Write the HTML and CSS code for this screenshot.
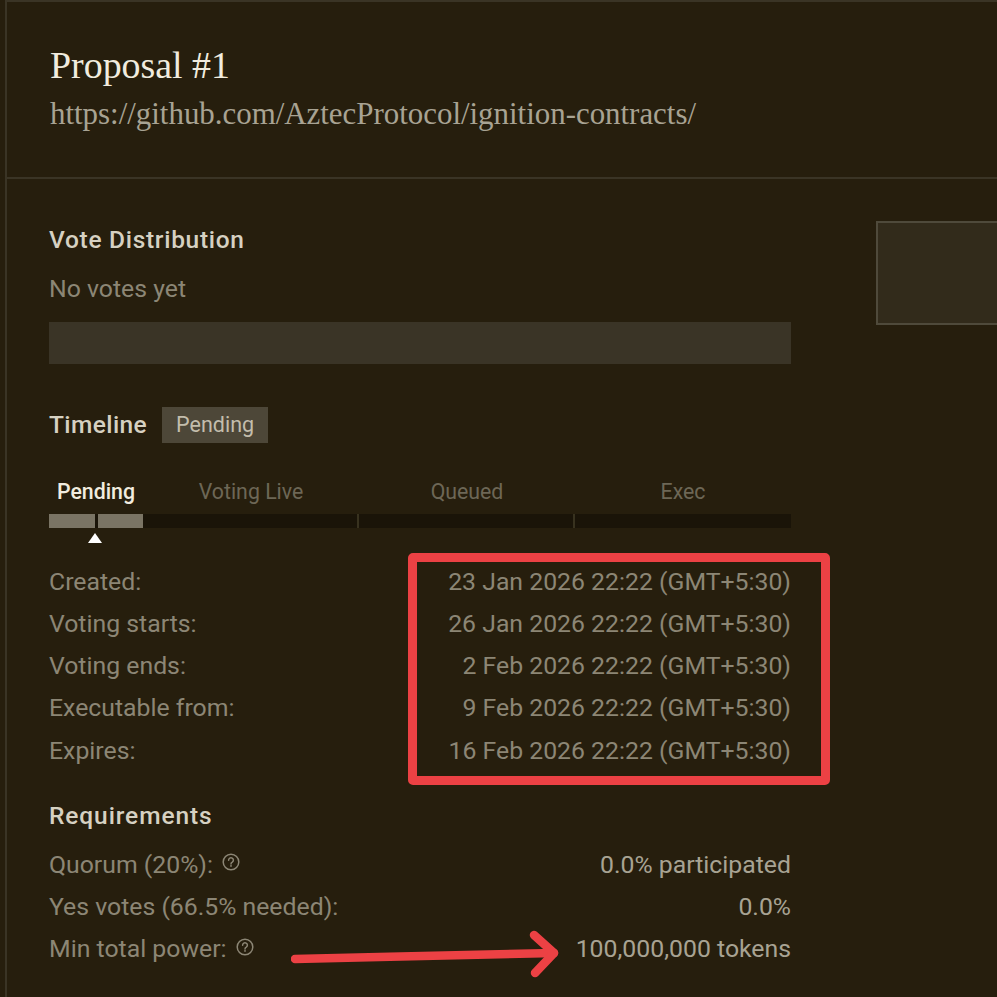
FILE: index.html
```html
<!DOCTYPE html>
<html lang="en">
<head>
<meta charset="utf-8">
<title>Proposal #1</title>
<link rel="stylesheet" href="styles.css">
</head>
<body>
<div class="panel">
  <header class="head">
    <h1 class="title">Proposal #1</h1>
    <div class="url">https://github.com/AztecProtocol/ignition-contracts/</div>
  </header>
  <div class="content">
    <main class="main">
      <h2 class="h">Vote Distribution</h2>
      <div class="novotes">No votes yet</div>
      <div class="votebar"></div>
      <div class="tl-head">
        <h2 class="h">Timeline</h2>
        <span class="badge">Pending</span>
      </div>
      <div class="stages">
        <span class="stage active">Pending</span>
        <span class="stage">Voting Live</span>
        <span class="stage">Queued</span>
        <span class="stage">Exec</span>
      </div>
      <div class="track">
        <div class="seg">
          <span class="fill"></span><span class="fill"></span>
          <span class="marker"></span>
        </div>
        <div class="seg"></div>
        <div class="seg"></div>
        <div class="seg"></div>
      </div>
      <dl class="rows dates">
        <div class="row"><dt>Created:</dt><dd>23 Jan 2026 22:22 (GMT+5:30)</dd></div>
        <div class="row"><dt>Voting starts:</dt><dd>26 Jan 2026 22:22 (GMT+5:30)</dd></div>
        <div class="row"><dt>Voting ends:</dt><dd>2 Feb 2026 22:22 (GMT+5:30)</dd></div>
        <div class="row"><dt>Executable from:</dt><dd>9 Feb 2026 22:22 (GMT+5:30)</dd></div>
        <div class="row"><dt>Expires:</dt><dd>16 Feb 2026 22:22 (GMT+5:30)</dd></div>
      </dl>
      <h2 class="h req">Requirements</h2>
      <dl class="rows">
        <div class="row"><dt>Quorum (20%):<svg class="help" viewBox="0 0 18 18"><circle cx="9" cy="9" r="7.8"/><path d="M6.6 7.2a2.4 2.4 0 1 1 3.7 2c-.9.5-1.3 1-1.3 1.8"/><path d="M9 12.6v.6"/></svg></dt><dd class="val">0.0% participated</dd></div>
        <div class="row"><dt>Yes votes (66.5% needed):</dt><dd class="val">0.0%</dd></div>
        <div class="row"><dt>Min total power:<svg class="help" viewBox="0 0 18 18"><circle cx="9" cy="9" r="7.8"/><path d="M6.6 7.2a2.4 2.4 0 1 1 3.7 2c-.9.5-1.3 1-1.3 1.8"/><path d="M9 12.6v.6"/></svg></dt><dd class="val">100,000,000 tokens</dd></div>
      </dl>
    </main>
    <aside class="side"></aside>
  </div>
</div>
<div class="callout-box"></div>
<svg class="callout-arrow" viewBox="0 0 270 50"><path d="M4 29C90 27 180 25 263 23"/><path d="M243 5L263 23L244 43"/></svg>
</body>
</html>
```
FILE: styles.css
```css
* { box-sizing: border-box; }
html, body { margin: 0; height: 100%; }
body {
  position: relative;
  overflow: hidden;
  background: #261e0d;
  font-family: Roboto, "Liberation Sans", sans-serif;
  color: #8c8675;
}
.panel {
  margin-left: 5px;
  height: 997px;
  border-left: 2px solid #3a3425;
  border-top: 2px solid #3a3425;
}
.head {
  height: 177px;
  padding: 41px 0 0 43px;
  border-bottom: 2px solid #3a3425;
}
.title {
  margin: 0;
  font: 400 37.9px/44px "Liberation Serif", serif;
  color: #f1ecdf;
}
.url {
  margin-top: 9px;
  font: 400 30.9px/36px "Liberation Serif", serif;
  color: #a8a393;
}
.content { display: flex; align-items: flex-start; }
.main { width: 742px; margin: 47px 0 0 42px; }
.side {
  width: 121px;
  height: 104px;
  margin: 42px 0 0 85px;
  flex: none;
  background: #322b1b;
  border: 2px solid #4f4a3b;
  border-right: 0;
}
.h {
  margin: 0;
  font-size: 24.5px;
  line-height: 28px;
  font-weight: 500;
  letter-spacing: .7px;
  color: #d6d1c2;
}
.tl-head .h { letter-spacing: .4px; }
.novotes { margin-top: 21px; font-size: 24.8px; line-height: 28px; }
.votebar { margin-top: 19px; height: 42px; background: #3a3426; }
.tl-head { display: flex; align-items: center; gap: 15px; margin-top: 43px; }
.badge {
  padding: 0 14px;
  height: 36px;
  font-size: 21.5px;
  line-height: 36px;
  background: #4d4738;
  color: #c3bdac;
}
.stages { display: grid; grid-template-columns: 94px 216px 216px 216px; margin-top: 36px; }
.stage { text-align: center; font-size: 21.3px; line-height: 26px; color: #6d6756; }
.stage.active { color: #f1ecdf; font-weight: 500; }
.track {
  display: grid;
  grid-template-columns: 94px 216px 216px 216px;
  margin-top: 9px;
  height: 14px;
  background: #1a1408;
}
.track .seg { position: relative; display: flex; gap: 3px; border-right: 2px solid #38321f; height: 14px; }
.track .seg:first-child { border-right: 0; }
.track .seg:last-child { border-right: 0; }
.fill { flex: 1; background: #7a7464; }
.marker {
  position: absolute;
  left: 39px;
  top: 19px;
  border-left: 7px solid transparent;
  border-right: 7px solid transparent;
  border-bottom: 10px solid #fff;
}
.rows { margin: 0; }
.dates { margin-top: 32px; }
.row {
  display: flex;
  justify-content: space-between;
  align-items: center;
  height: 42.25px;
  font-size: 24.8px;
}
.row dt { display: flex; align-items: center; }
.row dd { margin: 0; color: #8c8675; }
.row dd.val { color: #a8a393; }
.help {
  width: 18px;
  height: 18px;
  margin: -4px 0 0 9px;
  fill: none;
  stroke: currentColor;
  stroke-width: 1.5;
  stroke-linecap: round;
}
.req { margin-top: 31px; margin-bottom: 13px; letter-spacing: .9px; }
.callout-box {
  position: absolute;
  left: 408px;
  top: 553px;
  width: 422px;
  height: 232px;
  border: 9px solid #ec4144;
  border-radius: 5px;
}
.callout-arrow {
  position: absolute;
  left: 291px;
  top: 930px;
  width: 270px;
  height: 50px;
  fill: none;
  stroke: #ec4144;
  stroke-width: 8.5;
  stroke-linecap: round;
  stroke-linejoin: round;
}
```
